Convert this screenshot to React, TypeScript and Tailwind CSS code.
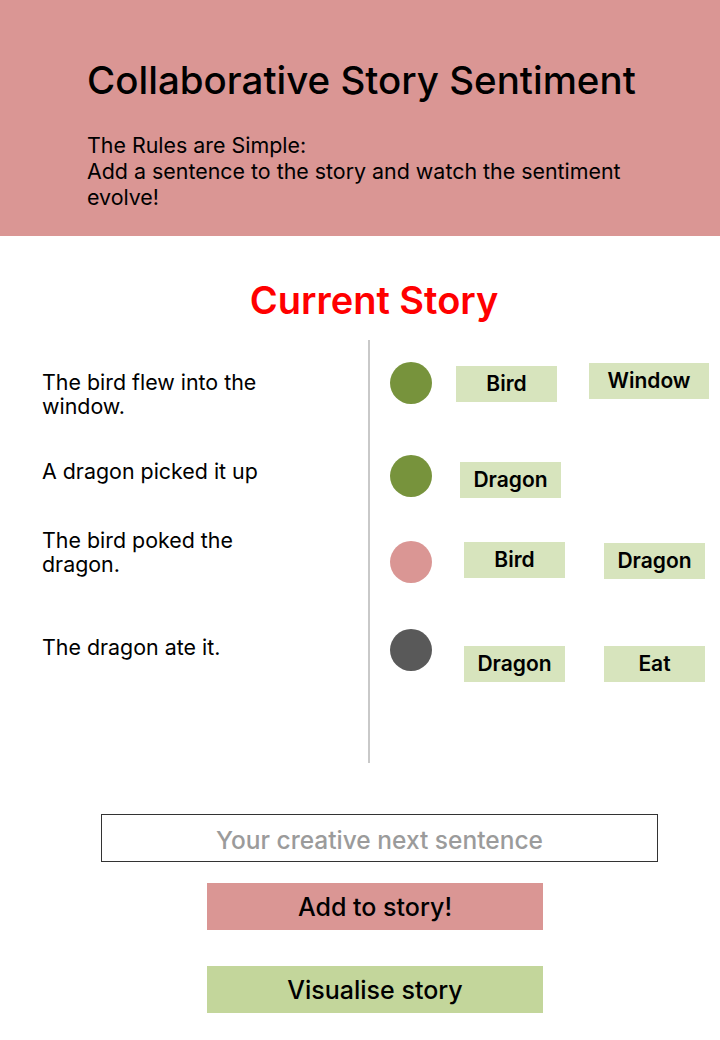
import React from 'react';

type Row = {
    mood: string;
    tags: { label: string; cls: string }[];
    cls: string;
};

const rows: Row[] = [
    {
        mood: 'bg-[#77933c]',
        cls: '',
        tags: [
            { label: 'Bird', cls: 'ml-[24px] mt-[4px] w-[101px]' },
            { label: 'Window', cls: 'ml-[32px] mt-[1px] w-[120px]' },
        ],
    },
    {
        mood: 'bg-[#77933c]',
        cls: 'mt-[51px]',
        tags: [{ label: 'Dragon', cls: 'ml-[28px] mt-[7px] w-[101px]' }],
    },
    {
        mood: 'bg-[#da9694]',
        cls: 'mt-[43px]',
        tags: [
            { label: 'Bird', cls: 'ml-[32px] mt-[1px] w-[101px]' },
            { label: 'Dragon', cls: 'ml-[39px] mt-[2px] w-[101px]' },
        ],
    },
    {
        mood: 'bg-[#595959]',
        cls: 'mt-[46px]',
        tags: [
            { label: 'Dragon', cls: 'ml-[32px] mt-[17px] w-[101px]' },
            { label: 'Eat', cls: 'ml-[39px] mt-[17px] w-[101px]' },
        ],
    },
];

const App: React.FC = () => {
    return (
        <div className="min-h-screen bg-white font-['Inter',sans-serif] text-black">
            <div className="h-[236px] bg-[#da9694] pl-[87px] pr-[60px] pt-[56px]">
                <h1 className="text-[38.5px] leading-[48px] font-medium">Collaborative Story Sentiment</h1>
                <p className="mt-[28px] text-[21.4px] leading-[26px] w-[560px]">
                    The Rules are Simple:
                    <br />
                    Add a sentence to the story and watch the sentiment evolve!
                </p>
            </div>

            <h2 className="mt-[42px] text-center pl-[28px] text-[38px] leading-[44px] font-semibold text-[#ff0000]">
                Current Story
            </h2>

            <div className="mt-[18px] flex h-[423px]">
                <div className="w-[368px] pl-[42px] pt-[30px] text-[21.4px] leading-[24px]">
                    <p className="w-[260px]">The bird flew into the window.</p>
                    <p className="mt-[41px] w-[260px]">A dragon picked it up</p>
                    <p className="mt-[45px] w-[260px]">The bird poked the dragon.</p>
                    <p className="mt-[59px] w-[260px]">The dragon ate it.</p>
                </div>
                <div className="w-[2px] bg-[#c9c9c9]" />
                <div className="flex-1 pl-[20px] pt-[22px]">
                    {rows.map((row, i) => (
                        <div key={i} className={`flex items-start ${row.cls}`}>
                            <div className={`h-[42px] w-[42px] shrink-0 rounded-full ${row.mood}`} />
                            {row.tags.map((t, j) => (
                                <div
                                    key={j}
                                    className={`flex h-[36px] shrink-0 items-center justify-center bg-[#d7e4bd] text-[21px] font-semibold ${t.cls}`}
                                >
                                    {t.label}
                                </div>
                            ))}
                        </div>
                    ))}
                </div>
            </div>

            <div className="mt-[51px] ml-[101px] w-[557px]">
                <input
                    type="text"
                    placeholder="Your creative next sentence"
                    className="h-[48px] w-full border border-[#333333] bg-white pt-[4px] text-center text-[24.5px] font-medium placeholder:text-[#9b9b9b] outline-none"
                />
            </div>
            <div className="ml-[207px] w-[336px]">
                <button className="mt-[21px] h-[47px] w-full bg-[#da9694] pt-[3px] text-[25px] font-medium">Add to story!</button>
                <button className="mt-[36px] h-[47px] w-full bg-[#c3d69b] pt-[3px] text-[25px] font-medium">Visualise story</button>
            </div>
        </div>
    );
};

export default App;
